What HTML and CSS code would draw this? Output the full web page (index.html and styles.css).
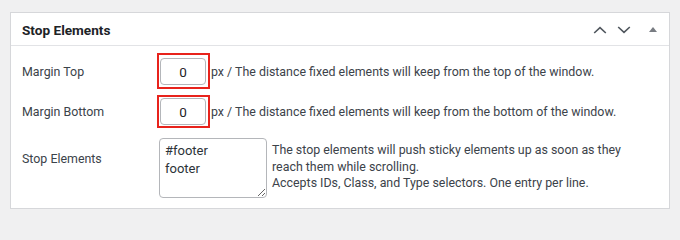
FILE: index.html
```html
<!DOCTYPE html>
<html lang="en">
<head>
<meta charset="utf-8">
<title>Stop Elements</title>
<link rel="stylesheet" href="styles.css">
</head>
<body>
<div class="postbox">
  <div class="postbox-header">
    <h2 class="postbox-title">Stop Elements</h2>
    <div class="handle-actions">
      <button class="handle-btn" aria-label="Move up">
        <svg width="14" height="8" viewBox="0 0 14 8"><path d="M1.2 7 L7 1.6 L12.8 7" fill="none" stroke="#50575e" stroke-width="1.6"/></svg>
      </button>
      <button class="handle-btn" aria-label="Move down">
        <svg width="14" height="8" viewBox="0 0 14 8"><path d="M1.2 1 L7 6.4 L12.8 1" fill="none" stroke="#50575e" stroke-width="1.6"/></svg>
      </button>
      <button class="handle-btn toggle" aria-label="Toggle panel">
        <svg width="8" height="5" viewBox="0 0 8 5"><path d="M0 5 L4 0 L8 5 Z" fill="#787c82"/></svg>
      </button>
    </div>
  </div>
  <div class="postbox-body">
    <div class="field-row row-top">
      <label class="field-label">Margin Top</label>
      <span class="highlight hl-first"><input class="num-input" type="text" value="0"></span>
      <span class="field-desc">px / The distance fixed elements will keep from the top of the window.</span>
    </div>
    <div class="field-row row-bottom">
      <label class="field-label">Margin Bottom</label>
      <span class="highlight hl-second"><input class="num-input" type="text" value="0"></span>
      <span class="field-desc">px / The distance fixed elements will keep from the bottom of the window.</span>
    </div>
    <div class="field-row row-stop">
      <label class="field-label label-stop">Stop Elements</label>
      <textarea class="stop-area">#footer
footer</textarea>
      <p class="stop-desc">The stop elements will push sticky elements up as soon as they<br>reach them while scrolling.<br>Accepts IDs, Class, and Type selectors. One entry per line.</p>
    </div>
  </div>
</div>
</body>
</html>
```

FILE: styles.css
```css
html, body {
  margin: 0;
  padding: 0;
  background: #f0f0f1;
}

body {
  font-family: Roboto, "Liberation Sans", Arial, sans-serif;
  font-size: 12.4px;
  color: #3c434a;
  width: 680px;
  height: 218px;
  overflow: hidden;
}

.postbox {
  margin: 12px 10px 0;
  background: #fff;
  border: 1px solid #d6d7da;
}

.postbox-header {
  height: 32px;
  display: flex;
  align-items: center;
  justify-content: space-between;
  padding: 0 11px 0 11px;
  border-bottom: 1px solid #e2e3e6;
}

.postbox-title {
  margin: 0;
  font-size: 13.6px;
  font-weight: 700;
  color: #1d2327;
  padding-top: 1px;
}

.handle-actions {
  display: flex;
  align-items: center;
  margin-top: 2px;
}

.handle-btn {
  border: 0;
  background: none;
  padding: 0;
  display: flex;
  align-items: center;
  justify-content: center;
  width: 14px;
  height: 14px;
  margin-left: 10px;
}

.handle-btn.toggle {
  margin-left: 17px;
  width: 10px;
  margin-top: -1px;
}

.postbox-body {
  padding: 7px 0 10px 11px;
}

.field-row {
  display: flex;
  align-items: center;
}

.row-bottom {
  margin-top: 6px;
}

.row-stop {
  margin-top: 10px;
  align-items: flex-start;
}

.field-label {
  width: 135px;
  flex: none;
  color: #3c434a;
}

.label-stop {
  margin-top: 13px;
}

.highlight {
  display: inline-flex;
  border: 2px solid #e8231c;
  flex: none;
}

.hl-first {
  padding: 3px 2px 2px 1px;
}

.hl-second {
  padding: 1px 2px 1px 1px;
}

.num-input {
  box-sizing: border-box;
  width: 46px;
  height: 27px;
  border: 1px solid #b4b6ba;
  border-radius: 4px;
  text-align: center;
  font-family: Roboto, "Liberation Sans", Arial, sans-serif;
  font-size: 13.5px;
  color: #1d2327;
  padding: 0;
  background: #fff;
}

.field-desc {
  margin-left: 1px;
  color: #3c434a;
}

.stop-area {
  box-sizing: border-box;
  width: 108px;
  height: 60px;
  margin: 0 0 0 2px;
  border: 1px solid #b4b6ba;
  border-radius: 4px;
  padding: 3px 5px;
  font-family: Roboto, "Liberation Sans", Arial, sans-serif;
  font-size: 13px;
  line-height: 18px;
  color: #2c3338;
  resize: both;
  overflow: hidden;
}

.stop-desc {
  margin: 4px 0 0 5px;
  line-height: 16.5px;
  color: #3c434a;
}
```
